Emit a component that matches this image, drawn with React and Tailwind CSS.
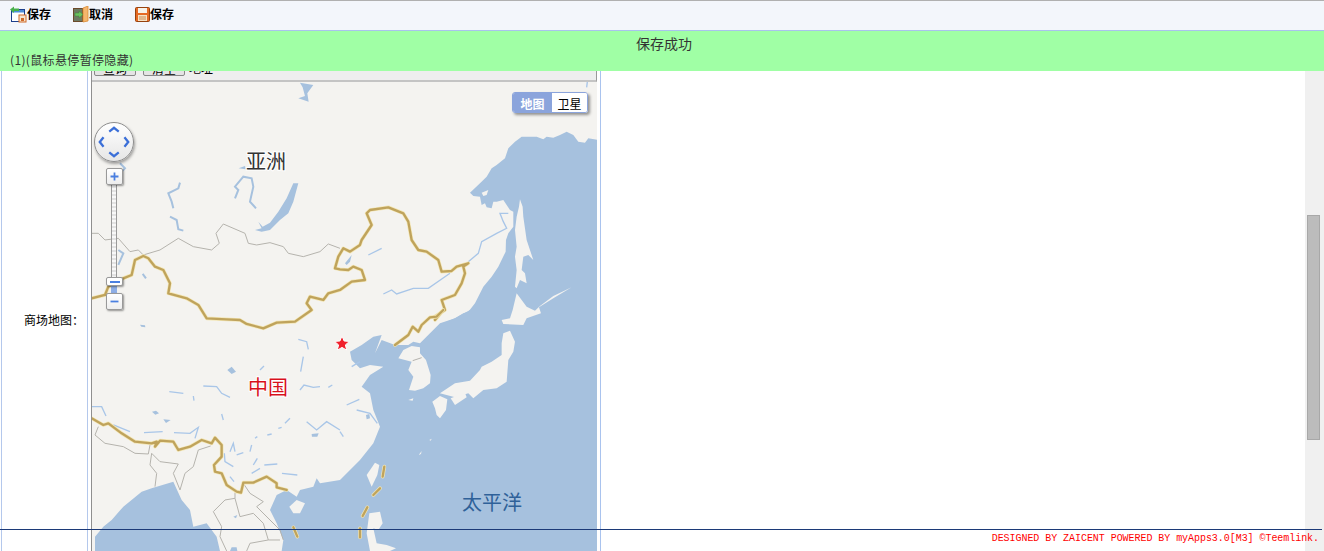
const CJK = '"Noto Sans CJK SC", "Liberation Sans", sans-serif';

const SEA = '#a6c1de';
const LAND = '#f4f3f0';

// all map shapes are noted in 3x coordinates, one group per quadrant of the map
const Q_TL = 'translate(80 70) scale(0.3333)';
const Q_TR = 'translate(340 70) scale(0.3333)';
const Q_BL = 'translate(80 310) scale(0.3333)';
const Q_BR = 'translate(340 310) scale(0.3333)';

const DASHES = [
  'M133 470L128 500',
  'M120 535L100 555',
  'M82 592L68 618',
  'M60 655L60 682',
  'M-140 652L-128 680',
];

function Border({ d }) {
  return (
    <>
      <path d={d} fill="none" stroke="#f3e6b4" strokeWidth="11" strokeLinejoin="round" strokeLinecap="round" />
      <path d={d} fill="none" stroke="#bfa35c" strokeWidth="7" strokeLinejoin="round" strokeLinecap="round" />
    </>
  );
}

function MapDrawing() {
  return (
    <svg viewBox="92 82 505 469" className="block w-[505px] h-[469px]" style={{ fontFamily: CJK }}>
      <rect x="92" y="82" width="505" height="469" fill={LAND} />

      {/* seas */}
      <g transform={Q_TR} fill={SEA}>
        <path d="M775 210L745 205 735 218 715 215 700 195 680 185 660 195 640 203 620 200 610 208 590 200 545 200 525 215 505 235 495 265 470 285 455 295 440 320 420 340 390 368 400 378 420 380 425 405 435 400 440 412 455 415 460 395 470 395 490 390 510 420 520 425 520 470 505 490 498 510 497 545 475 590 455 620 430 650 405 700 385 725 370 730 345 745 310 760 775 770Z" />
      </g>
      <g transform={Q_BR} fill={SEA}>
        <path d="M390 0L345 25 300 40 270 70 240 100 220 95 205 105 165 105 125 90 105 130 125 75 100 80 65 105 30 125 35 150 60 175 90 165 130 170 90 195 65 230 90 250 100 300 120 350 100 400 60 450 0 510 -60 520 -70 505 -80 530 -120 540 -130 560 -160 540 -190 555 -210 600 -190 640 -170 690 -175 723 300 723 775 723 775 0Z" />
      </g>
      <g transform={Q_BL} fill={SEA}>
        <path d="M45 723L45 680 70 650 95 630 130 590 185 545 215 535 280 515 305 570 330 600 340 650 380 640 410 680 420 723Z" />
        <path d="M450 723L455 712 470 712 472 723Z" />
        <path d="M628 590L650 570 675 580 660 610 640 610Z" fill={LAND} />
      </g>

      {/* islands */}
      <g transform={Q_TR} fill={LAND}>
        <path d="M540 388L548 410 550 440 560 510 580 570 565 555 550 560 545 600 555 610 560 640 540 630 530 655 525 650 530 600 525 560 530 530 525 480 530 440 537 410Z" />
        <path d="M530 670L518 720 510 745 485 750 490 762 550 765 560 745 603 730 597 712 640 685 695 652 640 678 600 708 585 722 560 710Z" />
        <path d="M15 580L35 555 30 575 20 585Z" fill={SEA} />
        <path d="M425 368L445 360 440 375 430 378Z" />
      </g>
      <g transform={Q_BR} fill={LAND}>
        <path d="M240 112L215 108 190 120 175 145 215 155 205 180 220 200 207 240 225 242 250 235 270 220 272 195 258 150 240 130Z" />
        <path d="M300 250L345 220 390 212 420 180 425 170 455 155 485 135 485 100 490 70 510 62 525 95 520 125 505 150 500 215 470 235 430 240 400 265 385 250 345 262Z" />
        <path d="M332 265L375 248 380 262 345 285Z" />
        <path d="M277 275L300 258 322 268 318 300 300 325 290 315 285 295Z" />
        <path d="M105 458L118 465 112 495 95 530 80 495Z" />
        <path d="M88 610L120 605 128 640 115 660 100 655 110 700 140 705 168 715 150 723 90 723 80 670Z" />
        <path d="M205 270L220 265 218 272Z" />
        <path d="M236 435L245 423 243 432Z" />
        <path d="M268 390L275 386 272 392Z" />
      </g>

      {/* rivers and lakes */}
      <g transform={Q_TL} fill={SEA} stroke="none">
        <path d="M525 480L545 485 570 480 600 450 625 430 640 395 655 340 640 340 620 385 595 425 570 458 548 470 535 455 545 475Z" />
        <path d="M660 38L700 45 682 70 686 95 655 85 675 78 668 52Z" />
        <path d="M476 295L495 288 497 298Z" />
      </g>
      <g transform={Q_TL} fill="none" stroke={SEA} strokeWidth="6">
        <path d="M465 385L475 360 465 350 490 320 515 325 520 350 510 395 528 415" />
        <path d="M300 338L295 355 265 370 275 395 280 415" />
        <path d="M270 440L290 450 295 478 310 482" />
        <path d="M115 540L130 550 115 585" />
        <path d="M188 612L198 625" />
        <path d="M120 280L135 295 125 305" />
      </g>
      <g transform={Q_TR} fill="none" stroke="#a9c6e8" strokeWidth="4">
        <path d="M130 672L155 660 170 672 220 655 265 655 330 610" />
        <path d="M385 575L415 550 425 515 470 490 500 475 490 455 480 430 505 430" />
        <path d="M85 555L125 535" />
        <path d="M742 36L740 52" />
      </g>
      <g transform={Q_BL} fill="none" stroke="#a9c6e8" strokeWidth="4">
        <path d="M370 228L410 230 425 250 450 262" />
        <path d="M268 245L310 250" />
        <path d="M655 88L680 95 685 118" />
        <path d="M670 140L662 185" />
        <path d="M660 240L672 225 700 232 720 230" />
        <path d="M540 180L552 168" />
        <path d="M36 290L65 290 78 318" />
        <path d="M192 368L248 365" />
        <path d="M282 368L330 370 355 352 345 385" />
        <path d="M100 345L150 365" />
        <path d="M425 312L430 330" />
        <path d="M433 430L435 455 460 470" />
        <path d="M450 425L460 400 465 425" />
        <path d="M470 435L490 428" />
        <path d="M510 425L515 405" />
        <path d="M520 465L532 445" />
        <path d="M515 490L540 475" />
        <path d="M553 465L592 462" />
        <path d="M606 490L652 495" />
        <path d="M680 335L710 360 740 335 780 360" />
        <path d="M615 340L630 325" />
        <path d="M450 500L462 515" />
        <path d="M340 258L342 272" />
        <path d="M525 385L532 380" />
        <path d="M562 375L575 372" />
        <path d="M595 355L605 352" />
        <path d="M745 232L757 225" />
      </g>
      <g transform={Q_BL} fill={SEA}>
        <path d="M442 180L455 170 468 185 455 192Z" />
        <path d="M216 305L228 302 237 310 226 314Z" />
        <path d="M250 328L272 330 258 339Z" />
        <path d="M180 44L195 46 196 52 184 50Z" />
        <path d="M695 372L716 370 712 380 696 380Z" />
        <path d="M460 620L472 615 468 625Z" />
      </g>
      <g transform={Q_BR} fill="none" stroke="#a9c6e8" strokeWidth="4">
        <path d="M35 170L60 155" />
        <path d="M20 285L58 268" />
        <path d="M50 300L90 310 112 340" />
        <path d="M0 365L10 380" />
      </g>
      <g transform={Q_BR} fill={SEA}>
        <path d="M78 315L88 312 90 325 80 328Z" />
      </g>

      {/* grey borders */}
      <g fill="none" stroke="#b5b3ad" strokeWidth="3">
        <g transform={Q_TL}>
          <path d="M35 490L55 490 75 510 115 505 150 545 175 540 190 555 240 540 295 505 340 530 395 540 418 520 408 490 430 462 495 490 505 520 530 525 570 518 610 530 625 550 670 560 720 545 745 522 780 535" />
        </g>
        <g transform={Q_BL}>
          <path d="M55 350L45 375 75 400 130 410 165 430 205 432 210 405" />
          <path d="M215 430L240 455 295 462 280 490 300 540 315 490 340 470 355 420 392 408" />
          <path d="M215 430L210 465 230 490 225 530" />
          <path d="M490 520L510 550 550 575 530 590 600 660 610 690" />
          <path d="M465 548L465 565 435 570 400 605 425 650 420 680 440 723" />
          <path d="M465 565L480 620 520 610 550 640 565 690 600 690" />
          <path d="M500 723L510 700 565 690" />
        </g>
        <g transform={Q_BR}>
          <path d="M218 152L245 143" />
        </g>
      </g>

      {/* national border */}
      <g transform={Q_TL}>
        <Border d="M35 685L75 675 85 650 130 625 155 615 165 570 190 558 205 565 225 590 250 600 270 640 265 670 320 685 355 705 380 745 440 748 480 750 500 762 550 775 590 758 645 755 695 720 680 700 690 680 730 690 745 670 780 660 815 635 855 630 845 600 820 590 805 600 780 598 765 595 775 560 790 535 810 545 840 525 845 510 875 465 860 430 870 420 925 412 970 430 985 455 995 510 1015 540 1040 545 1075 570 1085 605 1115 603 1130 590 1165 580 1150 590 1155 610 1145 640 1125 675 1085 690 1095 720 1065 740 1065 750 1090 720" />
      </g>
      <g transform={Q_BR}>
        <Border d="M310 0L290 20 270 22 245 45 235 65 218 50 205 75 165 105" />
        {DASHES.map((d) => (
          <Border key={d} d={d} />
        ))}
      </g>
      <g transform={Q_BL}>
        <Border d="M35 325L70 345 85 340 125 370 165 395 215 400 230 395 225 410 240 392 280 395 295 420 330 410 365 390 395 400 405 383 425 405 425 440 402 465 405 485 425 490 440 525 470 545 483 548 490 518 520 518 560 500 590 520 590 532 620 540" />
      </g>

      {/* labels */}
      <text x="246" y="169" fontSize="20" fill="#333" stroke="#fff" strokeWidth="2" paintOrder="stroke">亚洲</text>
      <text x="248" y="395" fontSize="20" fill="#d8101c" stroke="#fff" strokeWidth="2" paintOrder="stroke">中国</text>
      <text x="462" y="510" fontSize="20" fill="#2f6199">太平洋</text>

      {/* marker */}
      <path
        d="M342 336L344.1 341 349.5 341.4 345.4 344.9 346.7 350.2 342 347.4 337.3 350.2 338.6 344.9 334.5 341.4 339.9 341Z"
        fill="#f0202c"
        stroke="#fff"
        strokeWidth="1"
      />
    </svg>
  );
}

function NavControl() {
  return (
    <div className="absolute left-[2px] top-[40px] w-[40px] h-[40px] rounded-full border border-[#8d8d8d] bg-gradient-to-b from-white to-[#e6e6e6] shadow-[1px_2px_3px_rgba(0,0,0,0.35)]">
      <svg viewBox="0 0 40 40" className="w-full h-full" fill="none" stroke="#3b6fd8" strokeWidth="2.4">
        <path d="M15 9L20 5 25 9" />
        <path d="M15 31L20 35 25 31" />
        <path d="M9 15L5 20 9 25" />
        <path d="M31 15L35 20 31 25" />
      </svg>
    </div>
  );
}

function ZoomControl() {
  const btn =
    'absolute left-[14px] w-[17px] h-[17px] rounded-[2px] border border-[#999] bg-gradient-to-b from-white to-[#eee] shadow-[1px_1px_2px_rgba(0,0,0,0.4)]';
  return (
    <>
      <div className="absolute left-[19px] top-[100px] w-[6px] h-[98px] border-x border-[#999] bg-[repeating-linear-gradient(0deg,#e2e2e2_0,#e2e2e2_2px,#f8f8f8_2px,#f8f8f8_4px)]" />
      <div className="absolute left-[19px] top-[204px] w-[6px] h-[8px] bg-[#8eaee6]" />
      <div className={`${btn} top-[86px]`}>
        <svg viewBox="0 0 17 17" className="w-full h-full" stroke="#4a7fe0" strokeWidth="2">
          <path d="M4 8.5H13M8.5 4V13" />
        </svg>
      </div>
      <div className="absolute left-[14px] top-[195px] w-[17px] h-[9px] rounded-[2px] border border-[#999] bg-white shadow-[1px_1px_2px_rgba(0,0,0,0.4)]">
        <div className="mx-auto mt-[2.5px] w-[10px] h-[2px] bg-[#4a7fe0]" />
      </div>
      <div className={`${btn} top-[211px]`}>
        <svg viewBox="0 0 17 17" className="w-full h-full" stroke="#4a7fe0" strokeWidth="2">
          <path d="M4 8.5H13" />
        </svg>
      </div>
    </>
  );
}

function MapTypeControl() {
  return (
    <div className="absolute left-[420px] top-[10px] flex h-[21px] w-[76px] text-[12px] leading-[21px] rounded-[3px] overflow-hidden border border-[#8ba4dc] shadow-[2px_2px_3px_rgba(0,0,0,0.4)]">
      <div className="w-[39px] bg-[#8ba4dc] text-white font-bold text-center">地图</div>
      <div className="flex-1 bg-white text-black text-center">卫星</div>
    </div>
  );
}

function IconAddWindow() {
  return (
    <svg viewBox="0 0 17 17" className="w-[17px] h-[17px]">
      <rect x="1.5" y="3.5" width="13" height="12" fill="#fff" stroke="#1c3f8c" />
      <rect x="2" y="4" width="12" height="2.5" fill="#4d8fd8" />
      <path d="M0 3.5L4 0.5V2.5H9V5H4V7Z" fill="#49b04a" />
      <rect x="9" y="9" width="7" height="7" fill="#f4e6d0" stroke="#d06a28" />
      <rect x="11" y="12" width="3" height="3" fill="#d06a28" />
    </svg>
  );
}

function IconDoor() {
  return (
    <svg viewBox="0 0 16 17" className="w-[16px] h-[17px]">
      <rect x="0.5" y="2.5" width="9" height="13" fill="#6d7a62" stroke="#6b4a2a" />
      <path d="M10 2L15 0V15L10 16Z" fill="#f5b66c" stroke="#d98b32" strokeWidth="0.8" />
      <path d="M2 7H6V5L10 8.5 6 12V10H2Z" fill="#6cc25f" stroke="#3f8a3a" strokeWidth="0.5" />
    </svg>
  );
}

function IconFloppy() {
  return (
    <svg viewBox="0 0 15 15" className="w-[15px] h-[15px]">
      <rect x="0.5" y="0.5" width="14" height="14" rx="1" fill="#e56a24" stroke="#96430f" />
      <rect x="3" y="1" width="9" height="5" fill="#f7f3ea" />
      <rect x="3" y="8" width="9" height="6" fill="#f6e3c4" />
      <path d="M4 10H11M4 12H11" stroke="#c98a52" />
    </svg>
  );
}

function ToolItem({ icon, label, width }) {
  return (
    <div className={`flex items-center ${width}`}>
      {icon}
      <span className="text-[12px] font-bold text-black">{label}</span>
    </div>
  );
}

export default function App() {
  return (
    <div className="relative h-[551px] w-[1324px] overflow-hidden bg-white flex flex-col" style={{ fontFamily: CJK }}>
      {/* toolbar */}
      <div className="h-[31px] shrink-0 flex items-center pl-[10px] pb-[3px] bg-[#f3f6fb] border-t border-[#b0b0b0] border-b border-b-[#a9c3ee]">
        <ToolItem icon={<IconAddWindow />} label="保存" width="w-[63px]" />
        <ToolItem icon={<IconDoor />} label="取消" width="w-[62px]" />
        <ToolItem icon={<IconFloppy />} label="保存" width="w-[60px]" />
      </div>

      {/* message */}
      <div className="relative z-10 h-[40px] shrink-0 bg-[#a0ffa5] text-[#333]">
        <div className="text-center text-[14px] leading-[20px] pt-[2px] pl-[4px]">保存成功</div>
        <div className="pl-[10px] text-[12px] leading-[14px] tracking-[0.35px]">(1)(鼠标悬停暂停隐藏)</div>
      </div>

      {/* form */}
      <div className="flex-1 flex min-h-0">
        <div className="w-[87px] shrink-0 ml-[1px] flex items-center justify-end pr-[3px] pt-[18px] border-l border-r border-[#b4c8ec] text-[12px] text-black">
          商场地图：
        </div>
        <div className="w-[513px] shrink-0 pl-[3px] border-r border-[#a9c3ee] pr-[2px]">
          <div className="w-[506px] h-full border-l border-[#8f8f8f] overflow-hidden">
            <div className="relative h-[11px] overflow-hidden bg-[#eeeeee] border-b-2 border-[#c4c4c4] border-r border-r-[#999]">
              <div className="absolute left-[2px] bottom-[4px] flex items-end gap-[7px] text-[12px]">
                <div className="h-[16px] w-[42px] text-center leading-[16px] border border-[#888] rounded-[2px] bg-[#e4e4e4]">查询</div>
                <div className="h-[16px] w-[42px] text-center leading-[16px] border border-[#888] rounded-[2px] bg-[#e4e4e4]">清空</div>
                <div className="h-[16px] leading-[16px] ml-[-3px]">地址</div>
              </div>
            </div>
            <div className="relative h-[469px] w-[505px]">
              <MapDrawing />
              <NavControl />
              <ZoomControl />
              <MapTypeControl />
            </div>
          </div>
        </div>
        <div className="flex-1" />
        <div className="w-[19px] shrink-0 bg-[#f0f0f0] pl-[2px] pr-[4px] pt-[144px]">
          <div className="h-[225px] w-[13px] bg-[#bcbcbc] border border-[#a8a8a8]" />
        </div>
      </div>

      {/* footer overlays the scrolling form */}
      <div className="absolute left-0 bottom-0 w-[1322px] h-[22px] border-t border-[#1c3a78] flex justify-end pr-[3px]">
        <span className="text-[10px] leading-[16px] mt-[1px] tracking-[-0.05px] text-[#ff0000]" style={{ fontFamily: '"Liberation Mono", monospace' }}>
          DESIGNED BY ZAICENT POWERED BY myApps3.0[M3] ©Teemlink.
        </span>
      </div>
    </div>
  );
}
